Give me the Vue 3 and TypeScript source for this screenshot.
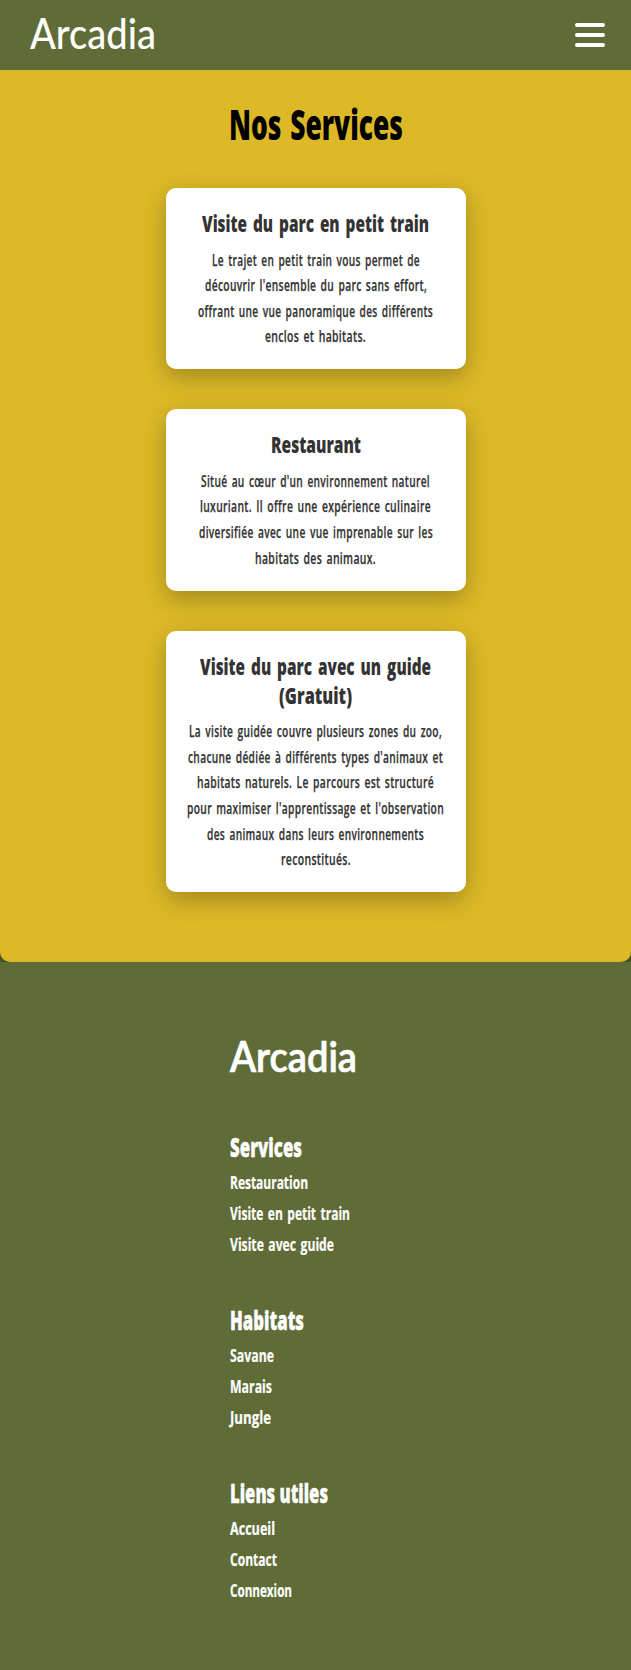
<script setup lang="ts">
import type { Directive } from 'vue'

interface Line { text: string; width: number }
interface Card { title: Line[]; body: Line[] }
interface Group { title: Line; links: Line[] }

const line = (text: string, width: number): Line => ({ text, width })

// Condenses or widens a line so that it fills its given width.
const fit = (el: HTMLElement, width: number) => {
  const inner = el.firstElementChild as HTMLElement
  el.style.width = `${width}px`
  inner.style.transform = `scaleX(${width / inner.getBoundingClientRect().width})`
}
const vFit: Directive<HTMLElement, number> = {
  mounted: (el, binding) => fit(el, binding.value),
}

const cards: Card[] = [
  {
    title: [line('Visite du parc en petit train', 227)],
    body: [
      line('Le trajet en petit train vous permet de', 208),
      line("découvrir l'ensemble du parc sans effort,", 222),
      line('offrant une vue panoramique des différents', 235),
      line('enclos et habitats.', 101),
    ],
  },
  {
    title: [line('Restaurant', 90)],
    body: [
      line("Situé au cœur d'un environnement naturel", 229),
      line('luxuriant. Il offre une expérience culinaire', 231),
      line('diversifiée avec une vue imprenable sur les', 234),
      line('habitats des animaux.', 121),
    ],
  },
  {
    title: [line('Visite du parc avec un guide', 231), line('(Gratuit)', 73)],
    body: [
      line('La visite guidée couvre plusieurs zones du zoo,', 253),
      line("chacune dédiée à différents types d'animaux et", 255),
      line('habitats naturels. Le parcours est structuré', 237),
      line("pour maximiser l'apprentissage et l'observation", 257),
      line('des animaux dans leurs environnements', 217),
      line('reconstitués.', 70),
    ],
  },
]

const groups: Group[] = [
  {
    title: line('Services', 72),
    links: [line('Restauration', 78), line('Visite en petit train', 120), line('Visite avec guide', 104)],
  },
  {
    title: line('Habitats', 74),
    links: [line('Savane', 44), line('Marais', 42), line('Jungle', 41)],
  },
  {
    title: line('Liens utiles', 98),
    links: [line('Accueil', 45), line('Contact', 47), line('Connexion', 62)],
  },
]
</script>

<template>
  <div class="page">
    <header class="header">
      <a class="logo"><span v-fit="126" class="fit"><span>Arcadia</span></span></a>
      <div class="burger" role="button" aria-label="Menu"><i></i><i></i><i></i></div>
    </header>

    <main class="services">
      <h1><span v-fit="174" class="fit"><span>Nos Services</span></span></h1>
      <article v-for="(card, i) in cards" :key="i" class="card">
        <h3>
          <span v-for="l in card.title" :key="l.text" class="row">
            <span v-fit="l.width" class="fit"><span>{{ l.text }}</span></span>
          </span>
        </h3>
        <p>
          <span v-for="l in card.body" :key="l.text" class="row">
            <span v-fit="l.width" class="fit"><span>{{ l.text }}</span></span>
          </span>
        </p>
      </article>
    </main>

    <footer class="footer">
      <div class="footer-inner">
        <div class="logo footer-logo"><span v-fit="127" class="fit"><span>Arcadia</span></span></div>
        <section v-for="g in groups" :key="g.title.text">
          <h4><span v-fit="g.title.width" class="fit"><span>{{ g.title.text }}</span></span></h4>
          <ul>
            <li v-for="l in g.links" :key="l.text">
              <a><span v-fit="l.width" class="fit"><span>{{ l.text }}</span></span></a>
            </li>
          </ul>
        </section>
      </div>
    </footer>
  </div>
</template>

<style>
body { margin: 0; background: #3d5528; }
</style>

<style scoped>
.page { font-family: "Open Sans", sans-serif; }
h1, h3, h4, p, ul { margin: 0; padding: 0; }
.fit { display: inline-block; white-space: nowrap; text-align: left; vertical-align: top; }
.fit > span { display: inline-block; transform-origin: left center; vertical-align: top; }

.header {
  height: 70px;
  box-sizing: border-box;
  padding: 0 26px 0 30px;
  display: flex;
  align-items: center;
  justify-content: space-between;
  background: #606c38;
}
.logo { color: #fff; font: 500 43px/52px Lato, sans-serif; }
.header .logo { margin-bottom: 5px; }
.burger { width: 30px; display: flex; flex-direction: column; gap: 6px; }
.burger i { height: 4px; border-radius: 2px; background: #fff; }

.services {
  height: 892px;
  box-sizing: border-box;
  padding-top: 29px;
  display: flex;
  flex-direction: column;
  align-items: center;
  background: #ddb927;
  border-radius: 0 0 10px 10px;
}
h1 {
  margin-bottom: 39px;
  font-size: 42px;
  font-weight: 800;
  line-height: 50px;
  word-spacing: 3px;
  color: #000;
}
.card {
  width: 300px;
  box-sizing: border-box;
  margin-bottom: 40px;
  padding: 20px;
  border-radius: 10px;
  background: #fff;
  box-shadow: 0 8px 24px rgba(0, 0, 0, 0.27);
  color: #333;
  text-align: center;
}
.row { display: block; }
h3 {
  position: relative;
  top: 1px;
  margin-bottom: 10px;
  font-size: 23.5px;
  font-weight: 800;
  line-height: 29px;
  word-spacing: 3px;
}
p {
  position: relative;
  top: 0.5px;
  font-size: 15.5px;
  font-weight: 600;
  line-height: 25.6px;
  letter-spacing: 0.5px;
  word-spacing: 2px;
  -webkit-text-stroke: 0.25px #333;
}

.footer {
  height: 708px;
  box-sizing: border-box;
  padding-top: 68px;
  display: flex;
  justify-content: center;
  background: #606c38;
  color: #fff;
}
.footer-inner { width: 171px; }
.footer-logo { margin-bottom: 49px; font-weight: 600; -webkit-text-stroke: 0.7px #fff; }
section { margin-bottom: 44px; }
h4 {
  margin-bottom: 4px;
  font-size: 26px;
  font-weight: 800;
  line-height: 32px;
  -webkit-text-stroke: 0.4px #fff;
}
ul { list-style: none; }
li {
  font-size: 17.5px;
  font-weight: 700;
  line-height: 31px;
  word-spacing: 2px;
  -webkit-text-stroke: 0.2px #fff;
}
</style>
